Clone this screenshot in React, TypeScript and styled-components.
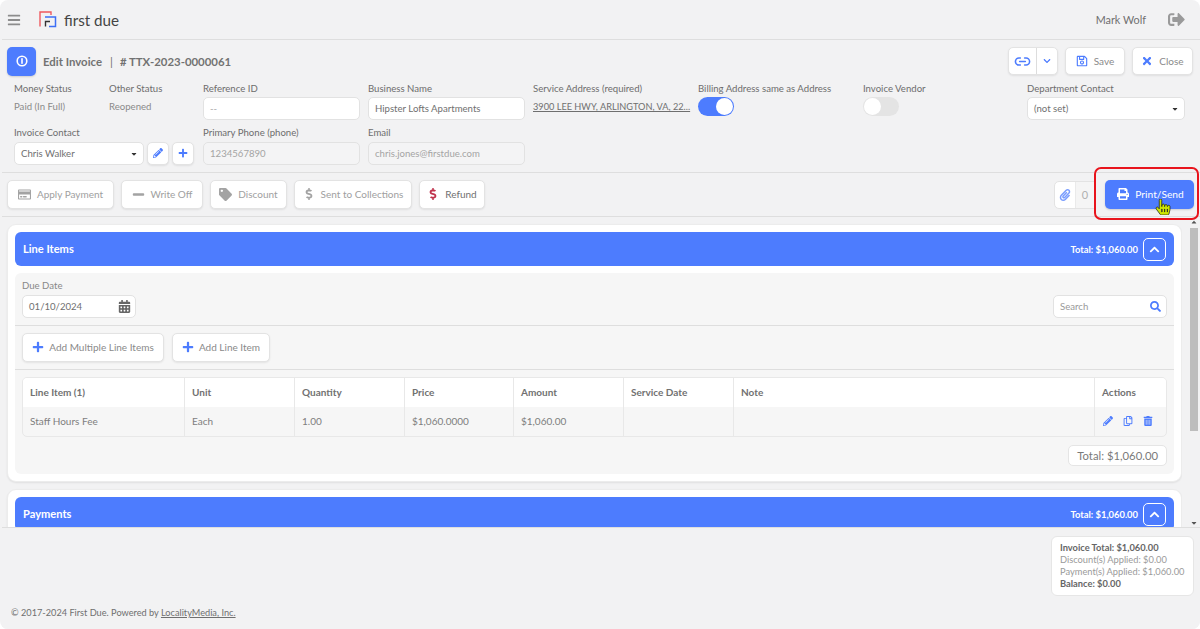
import React from "react";
import styled, { createGlobalStyle } from "styled-components";
import { Link2 } from "lucide-react";
import {
  FaBars, FaSignOutAlt, FaChevronDown, FaChevronUp, FaRegSave, FaTimes, FaPencilAlt, FaPlus,
  FaRegCreditCard, FaMinus, FaTag, FaDollarSign, FaPaperclip, FaPrint, FaSearch, FaCalendarAlt,
  FaRegCopy, FaTrashAlt, FaHandPointer, FaCaretDown, FaCaretUp,
} from "react-icons/fa";

const BLUE = "#4d7cfe";
const TEXT = "#6f6f6f";
const LINE = "#dedede";

const Global = createGlobalStyle`
  html, body { margin: 0; padding: 0; background: #fff; }
  * { box-sizing: border-box; }
  body { font-family: Lato, "Liberation Sans", sans-serif; font-size: 10px; color: ${TEXT}; }
`;

const Page = styled.div`
  position: relative; width: 1200px; height: 629px; background: #f2f2f3; overflow: hidden;
  border-radius: 8px; display: flex; flex-direction: column;
`;
const Header = styled.header`
  height: 40px; flex: none; display: flex; align-items: center; margin-left: 2px;
  border-bottom: 1px solid ${LINE}; padding: 0 15px 0 5px;
`;
const Burger = styled.span`display: flex; color: #8c8c8c; font-size: 14px; width: 32px;`;
const LogoText = styled.span`font-size: 15.2px; color: #444; margin-left: 7px; flex: 1; font-weight: 400;`;
const UserName = styled.span`font-size: 10.8px; color: #6f6f6f; margin-right: 22px;`;
const Logout = styled.span`display: flex; color: #9a9a9a; font-size: 17px;`;

const TitleRow = styled.div`
  height: 36px; margin-top: 3px; flex: none; display: flex; align-items: center; padding: 0 7px;
`;
const InfoBadge = styled.div`
  width: 29px; height: 29px; background: ${BLUE}; border-radius: 5px; display: flex;
  align-items: center; justify-content: center; box-shadow: 0 1px 2px rgba(0,0,0,.15);
`;
const TitleText = styled.div`
  margin-left: 7px; font-size: 11.4px; font-weight: 700; color: #727272; flex: 1; display: flex; align-items: center;
`;
const TitleSep = styled.span`margin: 0 7px 0 8px; font-weight: 400;`;
const TitleNum = styled.span`font-size: 11.4px;`;
const BtnGroup = styled.div`display: flex; gap: 7px;`;

const Btn = styled.button<{ $w?: number; $h?: number }>`
  height: ${p => p.$h ?? 28}px; ${p => (p.$w ? `width: ${p.$w}px;` : "")}
  display: inline-flex; align-items: center; justify-content: center; gap: 6px; padding: 0 8px 1px;
  background: #fff; border: 1px solid #e3e3e3; border-radius: 5px; font: inherit; font-size: 10px; color: #8a8a8a;
  box-shadow: 0 1px 2px rgba(0,0,0,.08); white-space: nowrap;
`;
const BlueIcon = styled.span<{ $size?: number }>`display: inline-flex; color: ${BLUE}; font-size: ${p => p.$size ?? 12}px;`;
const LinkSplit = styled.div`
  width: 50px; height: 28px; display: flex; background: #fff; border: 1px solid #e3e3e3; border-radius: 5px;
  box-shadow: 0 1px 2px rgba(0,0,0,.08);
`;
const SplitCell = styled.span<{ $w: number; $div?: boolean }>`
  width: ${p => p.$w}px; display: flex; align-items: center; justify-content: center; color: ${BLUE};
  ${p => (p.$div ? "border-right: 1px solid #ddd;" : "")}
`;

const Fields = styled.div`
  flex: none; display: grid; grid-template-columns: 87px 86px 157px 157px 157px 157px 156px 158px;
  column-gap: 8px; padding: 0 14px; margin-top: 3px; height: 90px; grid-template-rows: 44px 46px;
`;
const Field = styled.div<{ $span?: number }>`
  min-width: 0; ${p => (p.$span ? `grid-column: span ${p.$span};` : "")}
`;
const Label = styled.div`font-size: 9.6px; line-height: 13px; color: #6d6d6d; white-space: nowrap; margin-bottom: 2px;`;
const LowLabel = styled(Label)`margin-bottom: 3px;`;
const StaticVal = styled.div`font-size: 9.6px; line-height: 13px; color: #8a8a8a; margin-top: 5px;`;
const Input = styled.div<{ $disabled?: boolean; $w?: number }>`
  height: 23px; ${p => (p.$w ? `width: ${p.$w}px;` : "")} border: 1px solid #e2e2e2; border-radius: 5px;
  background: ${p => (p.$disabled ? "#f4f4f5" : "#fff")};
  color: ${p => (p.$disabled ? "#a4a4a4" : "#707070")}; font-size: 9.6px; display: flex; align-items: center;
  justify-content: space-between; padding: 0 5px 0 6px; white-space: nowrap; overflow: hidden; flex: none;
`;
const AddressLink = styled.div`
  font-size: 9.2px; color: #6f6f6f; text-decoration: underline; margin-top: 5px; line-height: 13px; white-space: nowrap;
`;
const Toggle = styled.div<{ $on?: boolean }>`
  width: 36px; height: 19px; border-radius: 10px; background: ${p => (p.$on ? BLUE : "#e4e4e4")};
  display: flex; align-items: center; padding: 1px; justify-content: ${p => (p.$on ? "flex-end" : "flex-start")};
`;
const Knob = styled.span`width: 17px; height: 17px; border-radius: 50%; background: #fff;`;
const ContactRow = styled.div`display: flex; gap: 3px;`;
const Caret = styled.span`display: flex; font-size: 8px; color: #333;`;

const ActionBar = styled.div`
  flex: none; height: 45px; border-top: 1px solid ${LINE}; border-bottom: 1px solid ${LINE}; margin-left: 2px;
  display: flex; align-items: center; padding: 0 6px 0 5px; gap: 7px;
`;
const ActionIcon = styled.span<{ $c?: string; $size?: number }>`display: inline-flex; font-size: ${p => p.$size ?? 13}px; color: ${p => p.$c ?? "#a3a3a3"};`;
const ActionBtn = styled(Btn)`color: #a0a0a0;`;
const RefundBtn = styled(Btn)`color: #707070;`;
const Spacer = styled.div`flex: 1;`;
const AttachGroup = styled.div`
  display: flex; height: 28px; width: 41px; background: #fff; border: 1px solid #e3e3e3; border-radius: 5px 0 0 5px; color: #b0b0b0;
`;
const AttachIcon = styled.span`
  width: 21px; display: flex; align-items: center; justify-content: center; color: ${BLUE}; opacity: .75; font-size: 12px; border-right: 1px solid #e3e3e3;
`;
const AttachCount = styled.span`flex: 1; display: flex; align-items: center; justify-content: center; font-size: 11px; background: #f5f5f5;`;
const PrintBtn = styled.button`
  width: 89px; height: 29px; margin-left: 3px; background: ${BLUE}; color: #fff; border: 0; border-radius: 5px; font: inherit; font-size: 10.2px;
  display: flex; align-items: center; justify-content: center; gap: 6px; padding: 0 0 1px 2px; box-shadow: 0 1px 2px rgba(0,0,0,.15);
`;

const ScrollArea = styled.div`flex: 1; min-height: 0; display: flex; overflow: hidden;`;
const ScrollContent = styled.div`flex: 1; padding: 7px 0 0 7px; overflow: hidden;`;
const Card = styled.section`
  width: 1175px; background: #fff; border: 1px solid #ececec; border-radius: 9px; padding: 7px; margin-bottom: 7px;
  box-shadow: 0 1px 2px rgba(0,0,0,.08);
`;
const CardHead = styled.div`
  height: 34px; background: ${BLUE}; color: #fff; border-radius: 6px; display: flex; align-items: center; padding: 0 8px;
  justify-content: space-between;
`;
const CardTitle = styled.div`font-size: 11.1px; font-weight: 700; padding-bottom: 1px;`;
const CardHeadRight = styled.div`display: flex; align-items: center; gap: 5px; font-size: 9.4px; font-weight: 700;`;
const Collapse = styled.span`
  width: 23px; height: 23px; border: 1px solid #fff; border-radius: 5px; display: flex; align-items: center; justify-content: center; font-size: 11px;
`;
const Panel = styled.div`margin-top: 7px; background: #f6f6f6; border-radius: 6px; height: 201px; display: flex; flex-direction: column;`;
const DueRow = styled.div`
  height: 53px; flex: none; border-bottom: 1px solid ${LINE}; padding: 7px 7px 0 7px; display: flex; justify-content: space-between;
  align-items: flex-end;
`;
const DueCol = styled.div`align-self: flex-start;`;
const DueLabel = styled.div`font-size: 9.6px; line-height: 12px; color: #888; margin-bottom: 3px;`;
const DateIcon = styled.span`display: flex; color: #666; font-size: 13px; margin-right: -1px;`;
const SearchWrap = styled.div`margin-bottom: 7px;`;
const SearchHint = styled.span`color: #999;`;
const DashHint = styled.span`color: #aaa;`;
const ButtonsRow = styled.div`height: 44px; flex: none; border-bottom: 1px solid ${LINE}; display: flex; align-items: center; gap: 8px; padding: 0 7px;`;
const AddBtn = styled(Btn)`height: 29px; gap: 5px;`;

const Table = styled.div`
  margin: 7px 7px 0; height: 60px; border: 1px solid #e8e8e8; border-radius: 5px; overflow: hidden;
  display: grid; grid-template-columns: 162px 110px 110px 109px 110px 110px 361px 1fr; grid-template-rows: 29px 29px;
`;
const Th = styled.div`
  background: #fff; font-size: 10px; font-weight: 700; color: #717171; display: flex; align-items: center; padding: 0 7px 2px;
  border-right: 1px solid #e8e8e8; &:nth-child(8) { border-right: 0; }
`;
const Td = styled.div`
  font-size: 10px; color: #7e7e7e; display: flex; align-items: center; padding: 0 7px 2px; border-right: 1px solid #e8e8e8;
  &:last-child { border-right: 0; gap: 10px; padding-left: 8px; }
`;
const RowAct = styled.span`display: inline-flex; color: ${BLUE}; font-size: 10px;`;
const TotalRow = styled.div`display: flex; justify-content: flex-end; padding: 8px 7px 0;`;
const TotalBox = styled.div`
  height: 21px; padding: 0 8px; background: #fff; border: 1px solid #e5e5e5; border-radius: 5px; font-size: 11.3px; color: #7a7a7a;
  display: flex; align-items: center;
`;

const ScrollTrack = styled.div`
  width: 18px; flex: none; display: flex; flex-direction: column; align-items: center; padding: 0 0 0 6px; color: #555; font-size: 8px;
`;
const ScrollArrow = styled.span`display: flex; height: 9px; align-items: center;`;
const Thumb = styled.div`width: 8px; height: 203px; background: #bdbdbd; margin-top: 2px;`;
const TrackFill = styled.div`flex: 1;`;

const Footer = styled.footer`
  flex: none; height: 102px; border-top: 1px solid ${LINE}; margin-left: 2px; padding: 8px 6px 0 9px; display: flex; justify-content: space-between;
  background: #f2f2f3;
`;
const Copy = styled.div`font-size: 9.2px; color: #6f6f6f; margin-top: 70px; line-height: 13px;`;
const CopyLink = styled.span`text-decoration: underline;`;
const Summary = styled.div`
  width: 143px; height: 60px; background: #fff; border: 1px solid #e6e6e6; border-radius: 6px; padding: 5px 0 0 8px; font-size: 9.3px; line-height: 12px; white-space: nowrap;
`;
const SumStrong = styled.div`color: #666; font-weight: 700;`;
const SumLight = styled.div`color: #9a9a9a;`;

const Highlight = styled.div`
  position: absolute; left: 1094px; top: 167px; width: 105px; height: 53px; border: 2px solid #e8141c; border-radius: 7px;
`;
const Cursor = styled.span`position: absolute; left: 1155px; top: 199px; display: flex; font-size: 16px; color: #cde600;`;

const Logo = () => (
  <svg width="18" height="17" viewBox="0 0 18 17" fill="none">
    <path d="M1 15.5V1h11v3" stroke="#ef5a5f" strokeWidth="1.4" />
    <path d="M6 6h10.5v9.5H10" stroke="#3d6ff5" strokeWidth="1.5" />
    <path d="M6.5 15.5v-5H11" stroke="#333" strokeWidth="1.4" />
  </svg>
);

const InfoGlyph = () => (
  <svg width="12" height="12" viewBox="0 0 12 12" fill="none">
    <circle cx="6" cy="6" r="4.8" stroke="#fff" strokeWidth="1.6" />
    <rect x="5.2" y="3.2" width="1.6" height="5.6" fill="#fff" />
  </svg>
);

const headers = ["Line Item (1)", "Unit", "Quantity", "Price", "Amount", "Service Date", "Note", "Actions"];
const cells = ["Staff Hours Fee", "Each", "1.00", "$1,060.0000", "$1,060.00", "", ""];

export default function App() {
  return (
    <Page>
      <Global />
      <Header>
        <Burger><FaBars /></Burger>
        <Logo />
        <LogoText>first due</LogoText>
        <UserName>Mark Wolf</UserName>
        <Logout><FaSignOutAlt /></Logout>
      </Header>

      <TitleRow>
        <InfoBadge><InfoGlyph /></InfoBadge>
        <TitleText>
          Edit Invoice<TitleSep>|</TitleSep><TitleNum># TTX-2023-0000061</TitleNum>
        </TitleText>
        <BtnGroup>
          <LinkSplit>
            <SplitCell $w={28} $div><Link2 size={17} strokeWidth={2.2} /></SplitCell>
            <SplitCell $w={20}><FaChevronDown size={8} /></SplitCell>
          </LinkSplit>
          <Btn $w={60}><BlueIcon><FaRegSave /></BlueIcon>Save</Btn>
          <Btn $w={61}><BlueIcon><FaTimes /></BlueIcon>Close</Btn>
        </BtnGroup>
      </TitleRow>

      <Fields>
        <Field><Label>Money Status</Label><StaticVal>Paid (In Full)</StaticVal></Field>
        <Field><Label>Other Status</Label><StaticVal>Reopened</StaticVal></Field>
        <Field><Label>Reference ID</Label><Input><DashHint>--</DashHint></Input></Field>
        <Field><Label>Business Name</Label><Input>Hipster Lofts Apartments</Input></Field>
        <Field><Label>Service Address (required)</Label><AddressLink>3900 LEE HWY, ARLINGTON, VA, 22...</AddressLink></Field>
        <Field><Label>Billing Address same as Address</Label><Toggle $on><Knob /></Toggle></Field>
        <Field><Label>Invoice Vendor</Label><Toggle><Knob /></Toggle></Field>
        <Field><Label>Department Contact</Label><Input>(not set)<Caret><FaCaretDown /></Caret></Input></Field>
        <Field $span={2}>
          <LowLabel>Invoice Contact</LowLabel>
          <ContactRow>
            <Input $w={130}>Chris Walker<Caret><FaCaretDown /></Caret></Input>
            <Btn $w={22} $h={23}><BlueIcon $size={10}><FaPencilAlt /></BlueIcon></Btn>
            <Btn $w={22} $h={23}><BlueIcon $size={10}><FaPlus /></BlueIcon></Btn>
          </ContactRow>
        </Field>
        <Field><LowLabel>Primary Phone (phone)</LowLabel><Input $disabled>1234567890</Input></Field>
        <Field><LowLabel>Email</LowLabel><Input $disabled>chris.jones@firstdue.com</Input></Field>
      </Fields>

      <ActionBar>
        <ActionBtn $w={107} $h={29}><ActionIcon><FaRegCreditCard /></ActionIcon>Apply Payment</ActionBtn>
        <ActionBtn $w={82} $h={29}><ActionIcon><FaMinus /></ActionIcon>Write Off</ActionBtn>
        <ActionBtn $w={77} $h={29}><ActionIcon><FaTag /></ActionIcon>Discount</ActionBtn>
        <ActionBtn $w={118} $h={29}><ActionIcon $size={12}><FaDollarSign /></ActionIcon>Sent to Collections</ActionBtn>
        <RefundBtn $w={66} $h={29}><ActionIcon $c="#c0334d" $size={12}><FaDollarSign /></ActionIcon>Refund</RefundBtn>
        <Spacer />
        <AttachGroup>
          <AttachIcon><FaPaperclip /></AttachIcon>
          <AttachCount>0</AttachCount>
        </AttachGroup>
        <PrintBtn><FaPrint size={12} />Print/Send</PrintBtn>
      </ActionBar>

      <ScrollArea>
        <ScrollContent>
          <Card>
            <CardHead>
              <CardTitle>Line Items</CardTitle>
              <CardHeadRight>Total: $1,060.00<Collapse><FaChevronUp /></Collapse></CardHeadRight>
            </CardHead>
            <Panel>
              <DueRow>
                <DueCol>
                  <DueLabel>Due Date</DueLabel>
                  <Input $w={114}>01/10/2024<DateIcon><FaCalendarAlt /></DateIcon></Input>
                </DueCol>
                <SearchWrap>
                  <Input $w={114}><SearchHint>Search</SearchHint><BlueIcon $size={11}><FaSearch /></BlueIcon></Input>
                </SearchWrap>
              </DueRow>
              <ButtonsRow>
                <AddBtn $w={142}><BlueIcon><FaPlus /></BlueIcon>Add Multiple Line Items</AddBtn>
                <AddBtn $w={98}><BlueIcon><FaPlus /></BlueIcon>Add Line Item</AddBtn>
              </ButtonsRow>
              <Table>
                {headers.map(h => <Th key={h}>{h}</Th>)}
                {cells.map((c, i) => <Td key={i}>{c}</Td>)}
                <Td>
                  <RowAct><FaPencilAlt /></RowAct>
                  <RowAct><FaRegCopy /></RowAct>
                  <RowAct><FaTrashAlt /></RowAct>
                </Td>
              </Table>
              <TotalRow><TotalBox>Total: $1,060.00</TotalBox></TotalRow>
            </Panel>
          </Card>
          <Card>
            <CardHead>
              <CardTitle>Payments</CardTitle>
              <CardHeadRight>Total: $1,060.00<Collapse><FaChevronUp /></Collapse></CardHeadRight>
            </CardHead>
          </Card>
        </ScrollContent>
        <ScrollTrack>
          <ScrollArrow><FaCaretUp /></ScrollArrow>
          <Thumb />
          <TrackFill />
          <ScrollArrow><FaCaretDown /></ScrollArrow>
        </ScrollTrack>
      </ScrollArea>

      <Footer>
        <Copy>© 2017-2024 First Due. Powered by <CopyLink>LocalityMedia, Inc.</CopyLink></Copy>
        <Summary>
          <SumStrong>Invoice Total: $1,060.00</SumStrong>
          <SumLight>Discount(s) Applied: $0.00</SumLight>
          <SumLight>Payment(s) Applied: $1,060.00</SumLight>
          <SumStrong>Balance: $0.00</SumStrong>
        </Summary>
      </Footer>

      <Highlight />
      <Cursor><FaHandPointer stroke="#222" strokeWidth={24} /></Cursor>
    </Page>
  );
}
